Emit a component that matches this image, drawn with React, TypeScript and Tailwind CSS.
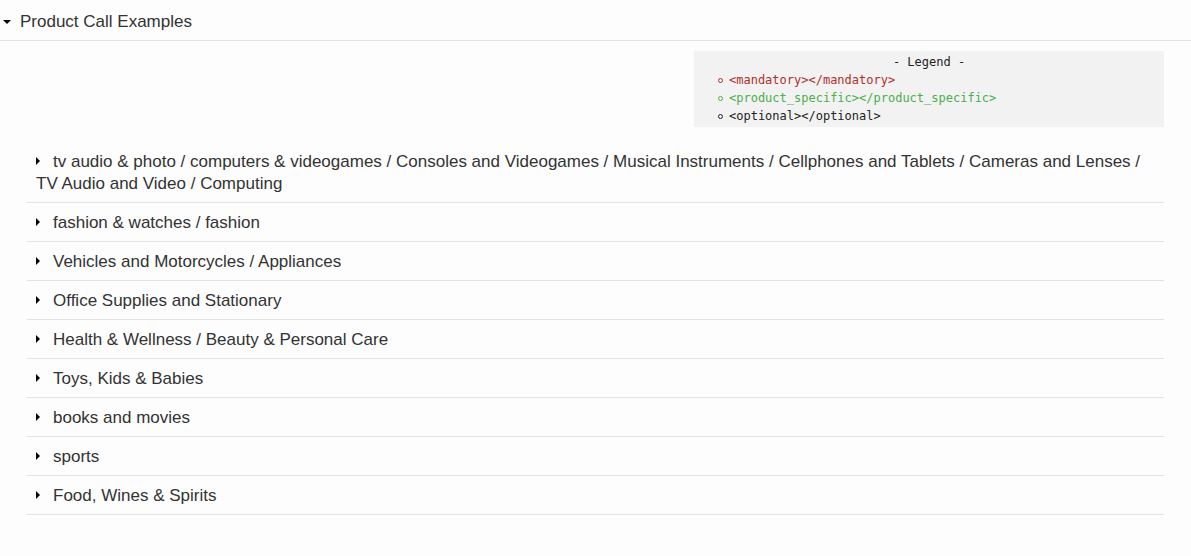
const categories = [
  "tv audio & photo / computers & videogames / Consoles and Videogames / Musical Instruments / Cellphones and Tablets / Cameras and Lenses / TV Audio and Video / Computing",
  "fashion & watches / fashion",
  "Vehicles and Motorcycles / Appliances",
  "Office Supplies and Stationary",
  "Health & Wellness / Beauty & Personal Care",
  "Toys, Kids & Babies",
  "books and movies",
  "sports",
  "Food, Wines & Spirits",
];

const legend = [
  { text: "<mandatory></mandatory>", color: "text-[#b0302a]" },
  { text: "<product_specific></product_specific>", color: "text-[#4cae4c]" },
  { text: "<optional></optional>", color: "text-[#222]" },
];

const App = () => {
  return (
    <div className="min-h-[556px] bg-[#fdfdfd] text-[#333] font-['Liberation_Sans',Arial,sans-serif]">
      {/* section header */}
      <div className="flex items-center h-[41px] pt-[4px] border-b border-[#e3e3e3] text-[17px]">
        <span className="w-0 h-0 ml-[3px] mr-[9px] border-l-[4px] border-r-[4px] border-t-[4px] border-l-transparent border-r-transparent border-t-black" />
        <span>Product Call Examples</span>
      </div>

      <div className="ml-[27px] w-[1137px]">
        <div className="flex justify-end mt-[10px]">
          <div className="w-[470px] h-[76px] bg-[#f2f2f2] pt-[2px] font-['DejaVu_Sans_Mono',monospace] text-[12px] leading-[18px]">
            <div className="text-center text-[#222]">- Legend -</div>
            <ul className="pl-[24px]">
              {legend.map((item) => (
                <li key={item.text} className={`flex items-center ${item.color}`}>
                  <span className="w-[5px] h-[5px] rounded-full border border-current mr-[6px]" />
                  <span>{item.text}</span>
                </li>
              ))}
            </ul>
          </div>
        </div>

        <div className="mt-[15px]">
          {categories.map((cat) => (
            <div
              key={cat}
              className="border-b border-[#e3e3e3] pl-[9px] pt-[9px] pb-[7px] text-[17px] leading-[22px]"
            >
              <span className="inline-block align-middle w-0 h-0 mb-[3px] mr-[13px] border-t-[4px] border-b-[4px] border-l-[4px] border-t-transparent border-b-transparent border-l-black" />
              {cat}
            </div>
          ))}
        </div>
      </div>
    </div>
  );
};

export default App;
